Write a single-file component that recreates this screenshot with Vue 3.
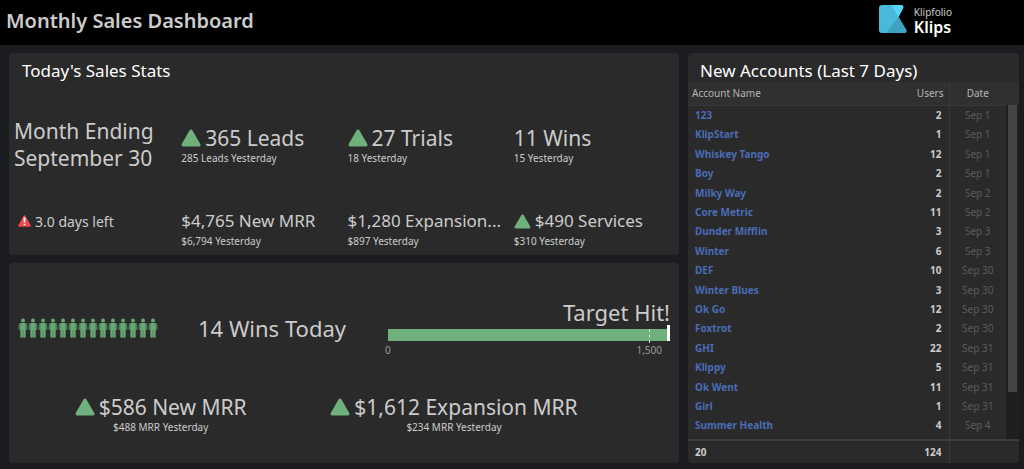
<script setup>
const topStats = [
  { value: '365 Leads', note: '285 Leads Yesterday', up: true },
  { value: '27 Trials', note: '18 Yesterday', up: true },
  { value: '11 Wins', note: '15 Yesterday', up: false },
]
const moneyStats = [
  { value: '$4,765 New MRR', note: '$6,794 Yesterday', up: false },
  { value: '$1,280 Expansion...', note: '$897 Yesterday', up: false },
  { value: '$490 Services', note: '$310 Yesterday', up: true },
]
const todayStats = [
  { value: '$586 New MRR', note: '$488 MRR Yesterday' },
  { value: '$1,612 Expansion MRR', note: '$234 MRR Yesterday' },
]
const accounts = [
  ['123', 2, 'Sep 1'],
  ['KlipStart', 1, 'Sep 1'],
  ['Whiskey Tango', 12, 'Sep 1'],
  ['Boy', 2, 'Sep 1'],
  ['Milky Way', 2, 'Sep 2'],
  ['Core Metric', 11, 'Sep 2'],
  ['Dunder Mifflin', 3, 'Sep 3'],
  ['Winter', 6, 'Sep 3'],
  ['DEF', 10, 'Sep 30'],
  ['Winter Blues', 3, 'Sep 30'],
  ['Ok Go', 12, 'Sep 30'],
  ['Foxtrot', 2, 'Sep 30'],
  ['GHI', 22, 'Sep 31'],
  ['Klippy', 5, 'Sep 31'],
  ['Ok Went', 11, 'Sep 31'],
  ['Girl', 1, 'Sep 31'],
  ['Summer Health', 4, 'Sep 4'],
]
const wins = 14
</script>

<template>
  <div class="page">
    <header class="topbar">
      <h1>Monthly Sales Dashboard</h1>
      <div class="brand">
        <svg class="logo" viewBox="0 0 28 28" aria-hidden="true">
          <path d="M3 0H22Q25 0 24 3L19.500 12L27 24.500Q28.500 28 25 28H3Q0 28 0 25V3Q0 0 3 0Z" fill="#48b9da" />
          <path d="M12.500 0H22Q25.500 0 24 3.500L19.500 12Z" fill="#54d5fb" />
          <path d="M19.500 12L27 24.500Q28.500 28 25 28H7Z" fill="#3ea3c0" />
        </svg>
        <div class="brand-text">
          <span class="brand-small">Klipfolio</span>
          <span class="brand-large">Klips</span>
        </div>
      </div>
    </header>

    <main class="board">
      <div class="left">
        <section class="panel stats">
          <h2>Today's Sales Stats</h2>
          <div class="row first">
            <p class="period">Month Ending<br />September 30</p>
            <div v-for="s in topStats" :key="s.value" class="stat">
              <div class="value big">
                <svg v-if="s.up" class="up" viewBox="0 0 19 17" aria-hidden="true">
                  <path d="M9.500 2L17 15H2Z" />
                </svg>
                <span>{{ s.value }}</span>
              </div>
              <div class="note">{{ s.note }}</div>
            </div>
          </div>
          <div class="row second">
            <p class="left-days">
              <svg class="warn" viewBox="0 0 13 12" aria-hidden="true">
                <path d="M6.500 1.200L11.800 10.800H1.200Z" fill="#ef4650" stroke="#ef4650" stroke-width="2" stroke-linejoin="round" />
                <path d="M5.500 2.500H7.500L7.200 7.500H5.800ZM5.700 8.700H7.300V10.300H5.700Z" fill="#fff" />
              </svg>
              <span>3.0 days left</span>
            </p>
            <div v-for="s in moneyStats" :key="s.value" class="stat">
              <div class="value mid">
                <svg v-if="s.up" class="up" viewBox="0 0 19 17" aria-hidden="true">
                  <path d="M9.500 2L17 15H2Z" />
                </svg>
                <span>{{ s.value }}</span>
              </div>
              <div class="note">{{ s.note }}</div>
            </div>
          </div>
        </section>

        <section class="panel wins">
          <div class="wins-row">
            <div class="people" role="img" aria-label="Wins today">
              <svg v-for="n in wins" :key="n" viewBox="0 0 10 20">
                <circle cx="5" cy="2.500" r="2" />
                <path class="limbs" d="M2.500 5H7.500Q9.400 5 9.400 7V12H7.500V19.500H2.500V12H.600V7Q.600 5 2.500 5Z" />
                <path d="M2.500 5H7.500V12H2.500ZM2.500 12H4.600V19.500H2.500ZM5.400 12H7.500V19.500H5.400Z" />
              </svg>
            </div>
            <div class="wins-text">14 Wins Today</div>
            <div class="target">
              <div class="target-title">Target Hit!</div>
              <div class="bar">
                <span class="goal"></span>
                <span class="marker"></span>
              </div>
              <div class="scale"><span>0</span><span>1,500</span></div>
            </div>
          </div>
          <div class="today">
            <div v-for="s in todayStats" :key="s.value" class="stat">
              <div class="value big">
                <svg class="up" viewBox="0 0 19 17" aria-hidden="true">
                  <path d="M9.500 2L17 15H2Z" />
                </svg>
                <span>{{ s.value }}</span>
              </div>
              <div class="note">{{ s.note }}</div>
            </div>
          </div>
        </section>
      </div>

      <section class="panel accounts">
        <h2>New Accounts (Last 7 Days)</h2>
        <div class="table-wrap">
          <table>
            <thead>
              <tr>
                <th class="name">Account Name</th>
                <th class="users">Users</th>
                <th class="date">Date</th>
              </tr>
            </thead>
            <tbody>
              <tr v-for="a in accounts" :key="a[0]">
                <td class="name"><a href="#">{{ a[0] }}</a></td>
                <td class="users">{{ a[1] }}</td>
                <td class="date">{{ a[2] }}</td>
              </tr>
              <tr class="spacer">
                <td></td>
                <td></td>
                <td class="date"></td>
              </tr>
            </tbody>
            <tfoot>
              <tr>
                <td class="name">20</td>
                <td class="users">124</td>
                <td class="date"></td>
              </tr>
            </tfoot>
          </table>
          <div class="track"><div class="thumb"></div></div>
        </div>
      </section>
    </main>
  </div>
</template>

<style>
body {
  background: #1b1c20;
}
</style>

<style scoped>
.page {
  min-height: 100vh;
  background: #1b1c20;
  color: #ccc;
  font-family: "Noto Sans", "Open Sans", sans-serif;
}
h1,
h2,
p {
  margin: 0;
}
.topbar {
  display: flex;
  align-items: center;
  justify-content: space-between;
  height: 45px;
  padding: 0 72px 0 6px;
  box-sizing: border-box;
  background: #000;
}
h1 {
  font-size: 20px;
  line-height: 28px;
  font-weight: 600;
  padding-bottom: 4px;
}
.brand {
  display: flex;
  gap: 7px;
  padding-bottom: 6px;
}
.logo {
  width: 28px;
  height: 28px;
}
.brand-text {
  display: flex;
  flex-direction: column;
  padding-top: 1px;
}
.brand-small {
  font-size: 10px;
  line-height: 13px;
}
.brand-large {
  font-size: 16px;
  line-height: 16px;
  font-weight: 600;
  color: #fff;
}
.board {
  display: grid;
  grid-template-columns: 670fr 331fr;
  gap: 9px;
  padding: 8px 5px 6px 9px;
}
.left {
  display: flex;
  flex-direction: column;
  gap: 8px;
  min-width: 0;
}
.panel {
  background: #2a2a2a;
  border-radius: 4px;
}
h2 {
  font-size: 17px;
  line-height: 22px;
  font-weight: 400;
  color: #fff;
  padding: 7px 13px 0;
}
.accounts h2 {
  padding-left: 12px;
}
.row {
  display: grid;
  grid-template-columns: repeat(4, 1fr);
  padding: 0 0 0 5px;
}
.first {
  padding-top: 36px;
}
.second {
  padding-top: 35px;
  padding-bottom: 8px;
}
.period {
  font-size: 21px;
  line-height: 27px;
}
.value {
  display: flex;
  align-items: center;
  gap: 4px;
  line-height: 28px;
  white-space: nowrap;
}
.big {
  font-size: 21px;
}
.mid {
  font-size: 17px;
}
.row .stat {
  padding-left: 1px;
}
.first .stat {
  padding-top: 6px;
}
.up {
  width: 20px;
  height: 18px;
  fill: #6fb07c;
  stroke: #6fb07c;
  stroke-width: 3px;
  stroke-linejoin: round;
}
.mid .up {
  width: 17px;
  height: 15px;
}
.note {
  font-size: 10px;
  line-height: 12px;
}
.left-days {
  display: flex;
  align-items: center;
  gap: 4px;
  height: 28px;
  padding-left: 4px;
  font-size: 14px;
}
.warn {
  width: 13px;
  height: 12px;
}
.wins {
  flex: 1;
}
.wins-row {
  display: grid;
  grid-template-columns: 180fr 190fr 282fr;
  align-items: start;
  padding: 35px 9px 0;
}
.people {
  display: flex;
  padding-top: 20px;
}
.people svg {
  width: 10px;
  height: 20px;
  fill: #69a875;
}
.people .limbs {
  fill: #4b7e57;
}
.wins-text {
  font-size: 22px;
  line-height: 28px;
  padding-top: 16px;
}
.target-title {
  font-size: 22px;
  line-height: 28px;
  text-align: right;
}
.bar {
  position: relative;
  height: 12px;
  margin-top: 3px;
  background: #6fb07c;
}
.goal {
  position: absolute;
  right: 20px;
  top: 0;
  height: 14px;
  border-left: 1px dashed #d5e8d8;
}
.marker {
  position: absolute;
  right: 0;
  top: -4px;
  width: 3px;
  height: 16px;
  background: #fff;
}
.scale {
  display: flex;
  justify-content: space-between;
  margin-left: -3px;
  padding: 2px 8px 0 0;
  font-size: 10px;
  line-height: 14px;
  color: #999;
}
.today {
  display: grid;
  grid-template-columns: 4fr 4fr 1fr;
  padding: 36px 5px 0;
}
.today .stat {
  display: flex;
  flex-direction: column;
  align-items: center;
}
.accounts {
  min-width: 0;
  overflow: hidden;
}
.table-wrap {
  position: relative;
}
table {
  width: 100%;
  border-collapse: collapse;
  font-size: 10px;
  line-height: 14px;
}
th,
td {
  padding: 0;
  height: 19px;
  box-sizing: border-box;
}
th {
  height: 23px;
  font-weight: 400;
  color: #b5b5b5;
  background: #303030;
  border-bottom: 1px solid #383838;
}
th.name {
  padding-left: 4px;
}
th.users {
  padding-right: 5px;
}
tbody tr:nth-child(5n + 2) td,
tbody tr:nth-child(5n + 4) td {
  height: 20px;
}
tbody .spacer:last-child td {
  height: 5px;
}
.name {
  text-align: left;
  padding-left: 7px;
}
.name a {
  color: #4b6cb7;
  text-decoration: none;
}
td.name,
td.users {
  font-weight: 700;
}
.users {
  width: 70px;
  text-align: right;
  padding-right: 7px;
}
.date {
  width: 70px;
  text-align: center;
  padding-right: 13px;
  border-left: 1px solid #383838;
  color: #5c5c5c;
}
th.date {
  color: #b5b5b5;
}
tfoot td {
  height: 23px;
  border-top: 2px solid #3c3c3c;
}
.track {
  position: absolute;
  right: 0;
  top: 23px;
  bottom: 24px;
  width: 13px;
  background: #1f1f1f;
}
.thumb {
  width: 9px;
  height: 86%;
  margin-left: 2px;
  background: #444;
}
</style>
